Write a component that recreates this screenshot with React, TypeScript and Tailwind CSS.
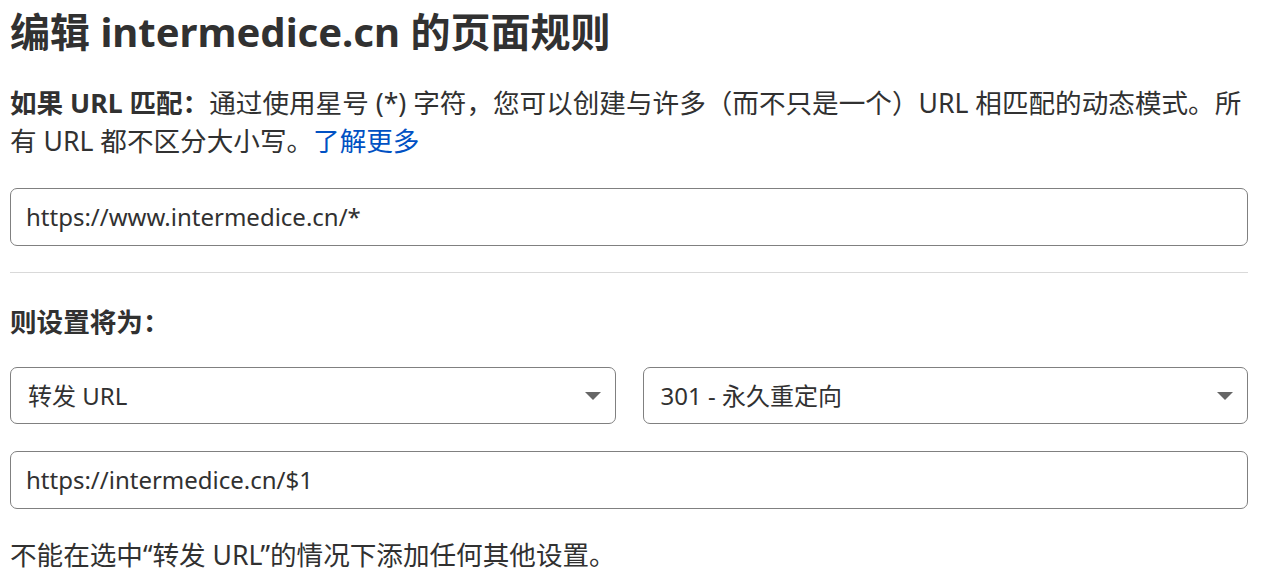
const font = 'font-["Noto_Sans","Noto_Sans_CJK_SC",sans-serif]';

function Caret() {
  return (
    <svg width="16" height="8" viewBox="0 0 16 8" className="shrink-0">
      <path d="M0 0 H16 L8 8 Z" fill="#666666" />
    </svg>
  );
}

function SelectBox({ value }: { value: string }) {
  return (
    <div className="flex h-[57px] flex-1 items-center justify-between rounded-[7px] border border-[#808080] bg-white pl-[17px] pr-[14px]">
      <span className="text-[24px] leading-none text-[#313131]">{value}</span>
      <Caret />
    </div>
  );
}

function TextBox({ value }: { value: string }) {
  return (
    <div className="flex h-[58px] items-center rounded-[7px] border border-[#808080] bg-white px-[15px]">
      <span className="text-[24px] leading-none text-[#313131]">{value}</span>
    </div>
  );
}

export default function App() {
  return (
    <div className={`${font} min-h-[586px] bg-white text-[#313131]`}>
      <div className="ml-[10px] w-[1238px] pt-[8px]">
        <h1 className="text-[40px] font-bold leading-[48px]">编辑 intermedice.cn 的页面规则</h1>

        <p className="mt-[28px] text-[26.6px] leading-[38px]">
          <span className="font-bold">如果 URL 匹配：</span>通过使用星号 (*) 字符，您可以创建与许多（而不只是一个）URL 相匹配的动态模式。所有 URL 都不区分大小写。
          <a className="text-[#0051c3]">了解更多</a>
        </p>

        <div className="mt-[28px]">
          <TextBox value="https://www.intermedice.cn/*" />
        </div>

        <div className="mt-[26px] h-px bg-[#d9d9d9]" />

        <h2 className="mt-[30px] text-[26.6px] font-bold leading-[38px]">则设置将为：</h2>

        <div className="mt-[26px] flex gap-[27px]">
          <SelectBox value="转发 URL" />
          <SelectBox value="301 - 永久重定向" />
        </div>

        <div className="mt-[27px]">
          <TextBox value="https://intermedice.cn/$1" />
        </div>

        <p className="mt-[27px] text-[26.6px] leading-[38px]">不能在选中“转发 URL”的情况下添加任何其他设置。</p>
      </div>
    </div>
  );
}
